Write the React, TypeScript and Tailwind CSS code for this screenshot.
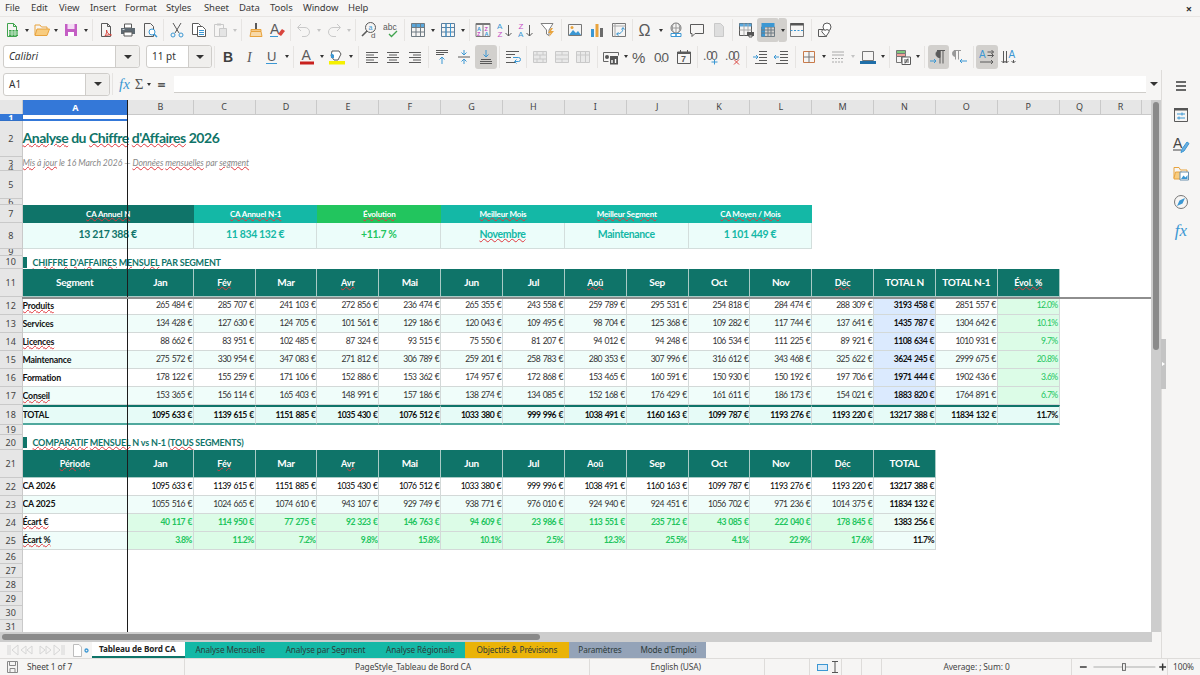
import type { ReactNode } from 'react'

const GRID = 'grid grid-cols-[22.5px_105.5px_65.8px_repeat(14,61.85px)_41px_41px_1fr]'
const MONTHS = ['Jan', 'Fév', 'Mar', 'Avr', 'Mai', 'Jun', 'Jul', 'Aoû', 'Sep', 'Oct', 'Nov', 'Déc']
const FLAGGED = ['Fév', 'Avr', 'Aoû', 'Déc', 'Évol. %', 'Période']
const LETTERS = ['B', 'C', 'D', 'E', 'F', 'G', 'H', 'I', 'J', 'K', 'L', 'M', 'N', 'O', 'P', 'Q', 'R']

const SEGMENTS = [
  { name: 'Produits', flag: true, m: ['265 484', '285 707', '241 103', '272 856', '236 474', '265 355', '243 558', '259 789', '295 531', '254 818', '284 474', '288 309'], n: '3193 458', p: '2851 557', e: '12.0%' },
  { name: 'Services', flag: false, m: ['134 428', '127 630', '124 705', '101 561', '129 186', '120 043', '109 495', '98 704', '125 368', '109 282', '117 744', '137 641'], n: '1435 787', p: '1304 642', e: '10.1%' },
  { name: 'Licences', flag: true, m: ['88 662', '83 951', '102 485', '87 324', '93 515', '75 550', '81 207', '94 012', '94 248', '106 534', '111 225', '89 921'], n: '1108 634', p: '1010 931', e: '9.7%' },
  { name: 'Maintenance', flag: false, m: ['275 572', '330 954', '347 083', '271 812', '306 789', '259 201', '258 783', '280 353', '307 996', '316 612', '343 468', '325 622'], n: '3624 245', p: '2999 675', e: '20.8%' },
  { name: 'Formation', flag: false, m: ['178 122', '155 259', '171 106', '152 886', '153 362', '174 957', '172 868', '153 465', '160 591', '150 930', '150 192', '197 706'], n: '1971 444', p: '1902 436', e: '3.6%' },
  { name: 'Conseil', flag: true, m: ['153 365', '156 114', '165 403', '148 991', '157 186', '138 274', '134 085', '152 168', '176 429', '161 611', '186 173', '154 021'], n: '1883 820', p: '1764 891', e: '6.7%' }
]
const TOTALS = ['1095 633', '1139 615', '1151 885', '1035 430', '1076 512', '1033 380', '999 996', '1038 491', '1160 163', '1099 787', '1193 276', '1193 220']
const PREV = ['1055 516', '1024 665', '1074 610', '943 107', '929 749', '938 771', '976 010', '924 940', '924 451', '1056 702', '971 236', '1014 375']
const DIFF = ['40 117', '114 950', '77 275', '92 323', '146 763', '94 609', '23 986', '113 551', '235 712', '43 085', '222 040', '178 845']
const DIFF_PCT = ['3.8%', '11.2%', '7.2%', '9.8%', '15.8%', '10.1%', '2.5%', '12.3%', '25.5%', '4.1%', '22.9%', '17.6%']

const B = '#3b97d3'
const O = '#e8a33d'
const R = '#d9453e'
const G = '#5a5a5a'
const L = '#c9c9c9'

function I({ children, size = 16 }: { children: ReactNode; size?: number }) {
  return (
    <svg width={size} height={size} viewBox="0 0 16 16" fill="none" stroke={G} strokeWidth={1}>
      {children}
    </svg>
  )
}

function Txt({ x, y, s, c = G, w = 400, it = false, f = 'Liberation Sans', children }: { x: number; y: number; s: number; c?: string; w?: number; it?: boolean; f?: string; children: ReactNode }) {
  return (
    <text x={x} y={y} fontSize={s} fill={c} stroke="none" fontWeight={w} fontStyle={it ? 'italic' : 'normal'} fontFamily={f}>
      {children}
    </text>
  )
}

const Grid = ({ c = G, head }: { c?: string; head?: string }) => (
  <>
    {head && <path d="M1.500 1.500h13v4h-13z" fill={head} stroke="none" />}
    <path d="M1.500 1.500h13v13h-13zM1.500 5.500h13M1.500 10h13M6 1.500v13M10.500 1.500v13" stroke={c} />
  </>
)

const Lines = ({ d, c = G }: { d: string; c?: string }) => <path d={d} stroke={c} />

const Tb = {
  newDoc: <I><path d="M3.500 1.500h6l3 3v10h-9z" stroke="#3fa34d" /><path d="M9.500 1.500v3h3" stroke="#3fa34d" /><path d="M5 8h9v6H5z" fill="#3fa34d" stroke="none" /><path d="M5 10h9M5 12h9M8 8v6M11 8v6" stroke="#c5e8c9" /></I>,
  open: <I><path d="M1 13V3h5l1.500 2H13v2" stroke={O} /><path d="M1 13.500l2-6.500h12.500l-2.500 6.500z" fill="#f8cc7f" stroke={O} /></I>,
  save: <I><path d="M2 2h12v12H2z" fill="#c45ec4" stroke="none" /><path d="M4.500 2h7v5h-7z" fill="#f5dcf5" stroke="none" /><path d="M5 10h6v4H5z" fill="#fff" stroke="none" /></I>,
  pdf: <I><path d="M3.500 1.500h6l3 3v10h-9z" /><path d="M9.500 1.500v3h3" /><path d="M7 14c1.500-2 2-5 1.500-6 .3 3 2 4.500 5 5-2-.5-5 0-6.500 1z" stroke={R} /></I>,
  print: <I><path d="M4.500 2h7v4h-7z" fill="#fff" /><path d="M1 6h14v6H1z" fill="#5f6a72" stroke="none" /><path d="M4 10h8v4H4z" fill="#fff" stroke={G} /><path d="M2.500 7.500h2" stroke="#cfd6da" /></I>,
  preview: <I><path d="M2.500 1.500h6l3 3v10h-9z" /><circle cx="10" cy="10" r="3" stroke={B} fill="#fff" /><path d="M12 12l3 3" stroke={B} strokeWidth={1.500} /></I>,
  cut: <I><path d="M4 1l6 10M12 1L6 11" /><circle cx="4" cy="13" r="2" stroke={B} /><circle cx="12" cy="13" r="2" stroke={B} /></I>,
  copy: <I><path d="M1.500 1.500h6l2 2v9h-8z" fill="#fff" /><path d="M6.500 4.500h5l3 3v7h-8z" fill="#fff" /><path d="M8 8.500h5M8 10.500h5M8 12.500h5" stroke={B} /></I>,
  paste: <I><path d="M2.500 2.500h9v12h-9z" stroke={L} /><path d="M5 1.500h4v2H5z" fill={L} stroke="none" /><path d="M7.500 6.500h7v8h-7z" fill="#e4e4e4" stroke={L} /></I>,
  brush: <I><path d="M7 1h2v6H7z" fill={G} stroke="none" /><path d="M3 7.500h10v2H3z" fill="#f3c98b" stroke={O} /><path d="M3 9.500h10l1 5H2z" fill="#f8d9a8" stroke={O} /></I>,
  clear: <I><Txt x={1} y={12} s={14} c={G}>A</Txt><path d="M9 12l4-5 3 2-4 5z" fill={R} stroke="none" /><path d="M1 14.500h8" stroke={B} /></I>,
  undo: <I><path d="M5 2L1.500 5.500 5 9" stroke={L} /><path d="M2 5.500h7a4.500 4.500 0 010 9H6" stroke={L} /></I>,
  redo: <I><path d="M11 2l3.500 3.500L11 9" stroke={L} /><path d="M14 5.500H7a4.500 4.500 0 000 9h3" stroke={L} /></I>,
  find: <I><circle cx="9.500" cy="5.500" r="5" /><path d="M6 9L1 14" strokeWidth={1.600} /><Txt x={7.500} y={8} s={7} c={B}>a</Txt><Txt x={10} y={15.500} s={8}>d</Txt></I>,
  spell: <I><Txt x={0} y={8} s={8.500}>abc</Txt><path d="M6 12l2.500 2.500L14 9" stroke="#3fa34d" strokeWidth={1.300} /></I>,
  table: <I><Grid c="#6f7b83" head="#5aa8dd" /></I>,
  cols: <I><Grid c="#5a7f9e" /><path d="M6 1.500v13M10.500 1.500v13" stroke={B} /></I>,
  sort: <I><path d="M1 1.500h14M1 1.500v13h14v-13M8 1.500v13" stroke="#777" /><path d="M1 1h14v2H1z" fill="#777" stroke="none" /><Txt x={2} y={8.500} s={5.500} c={B} w={700}>A</Txt><Txt x={2} y={14} s={5.500} c="#c54fc5" w={700}>Z</Txt><Txt x={9.500} y={8.500} s={5.500} c="#c54fc5" w={700}>Z</Txt><Txt x={9.500} y={14} s={5.500} c={B} w={700}>A</Txt></I>,
  az: <I><Txt x={0} y={7} s={8} c={B}>A</Txt><Txt x={0.500} y={15} s={8} c="#c54fc5">Z</Txt><path d="M11.500 3v11M8.500 11l3 3 3-3" /></I>,
  za: <I><Txt x={0.500} y={7} s={8} c="#c54fc5">Z</Txt><Txt x={0} y={15} s={8} c={B}>A</Txt><path d="M11.500 3v11M8.500 11l3 3 3-3" /></I>,
  filter: <I><path d="M1 1.500h12L9 8v5.500L6.500 12V8z" stroke="#808080" fill="#fff" /><path d="M11 6l-3 5h2.500L9 15l5-6h-3l2-3z" fill={O} stroke="none" /></I>,
  image: <I><path d="M1.500 2.500h13v11h-13z" stroke="#777" /><circle cx="5" cy="5.500" r="1.500" fill={O} stroke="none" /><path d="M2 13l4-5 3 3 2-2 3 4z" fill={B} stroke="none" /></I>,
  chart: <I><path d="M2 7h3v8H2z" fill={B} stroke="none" /><path d="M6.500 2h3v13h-3z" fill={O} stroke="none" /><path d="M11 6h3v9h-3z" fill="#6b6b6b" stroke="none" /></I>,
  pivot: <I><path d="M1.500 1.500h13v13h-13z" stroke="#777" /><path d="M1.500 4h13M4 1.500v13" stroke="#aaa" /><path d="M6 12c3 0 6-2 6-6M10.500 7.500L12 5.500l1.500 2M7.500 10.500L5.500 12l2 1.500" stroke={B} /></I>,
  omega: <I><Txt x={0.500} y={14} s={16}>Ω</Txt></I>,
  link: <I><circle cx="8" cy="6" r="5" stroke="#777" /><path d="M3 6h10M8 1v10M5.500 1.500c-1.500 3-1.500 6 0 9M10.500 1.500c1.500 3 1.500 6 0 9" stroke="#999" /><path d="M3 11.500h5v3H3zM8 11.500h5v3H8z" stroke={B} fill="#fff" /></I>,
  comment: <I><path d="M1.500 2.500h13v9H6l-3 3v-3H1.500z" /></I>,
  hf: <I><path d="M3.500 1.500h6l3 3v10h-9z" fill="#dedede" stroke={L} /></I>,
  printArea: <I><path d="M1.500 1.500h12v12h-12z" /><path d="M1.500 1.500h12v3h-12z" fill="#5aa8dd" stroke="none" /><path d="M1.500 8h12M6 1.500v12M10 1.500v12" stroke="#aaa" /><path d="M9 10h7v4H9z" fill="#555" stroke="none" /><path d="M11 13h3v2h-3z" fill="#fff" stroke={G} /></I>,
  freeze: <I><path d="M1.500 5h13v9.500h-13z" stroke="#6f7b83" /><path d="M1.500 1h13v4h-13z" fill="#3b97d3" stroke="none" /><path d="M1.500 5h3.500v9.500H1.500z" fill="#3b97d3" stroke="none" /><path d="M1.500 8h13M1.500 11h13M8 5v9.500M11 5v9.500" stroke="#6f7b83" /></I>,
  split: <I><path d="M1.500 1.500h13v13h-13z" stroke="#777" /><path d="M1.500 1h13v2.500h-13z" fill="#555" stroke="none" /><path d="M1.500 8.500h13" stroke={B} strokeDasharray="2 1.500" /></I>,
  shapes: <I><path d="M1.500 7.500h8v7h-8z" /><circle cx="10" cy="5" r="4" fill="#fff" /><path d="M9 14.500L5 10c-1-2 2-3 3-1.500 1-1.500 5-1 4 1.500z" fill="#fff" /></I>,

  bold: <I><Txt x={3} y={13} s={14} w={700} c="#3f3f3f">B</Txt></I>,
  italic: <I><Txt x={5} y={13} s={14} it f="Liberation Serif">I</Txt></I>,
  under: <I><Txt x={3} y={12} s={13}>U</Txt><path d="M2 14.500h11" stroke={B} /></I>,
  fontCol: <I><Txt x={2.500} y={11} s={14} >A</Txt><path d="M1 12.500h14v3H1z" fill="#c9211e" stroke="none" /></I>,
  highlight: <I><path d="M3 2h7l2 3-3 6H5L2 7z" fill="#fff" /><path d="M2 4l3 2v3H2z" fill={B} stroke="none" /><path d="M0 12h16v3.500H0z" fill="#f5f000" stroke="none" /></I>,
  alignL: <I><Lines d="M2 3.500h12M2 6h8M2 8.500h12M2 11h8M2 13.500h12" /></I>,
  alignC: <I><Lines d="M2 3.500h12M4 6h8M2 8.500h12M4 11h8M2 13.500h12" /></I>,
  alignR: <I><Lines d="M2 3.500h12M6 6h8M2 8.500h12M6 11h8M2 13.500h12" /></I>,
  vTop: <I><Lines d="M2 1.500h12M2 3.500h12M2 5.500h8" /><path d="M8 15V8M5.500 10.500L8 8l2.500 2.500" stroke={B} /></I>,
  vMid: <I><Lines d="M2 8h12" /><path d="M8 1v5M5.500 3.500L8 6l2.500-2.500M8 15v-5M5.500 12.500L8 10l2.500 2.500" stroke={B} /></I>,
  vBot: <I><Lines d="M3 10.500h10M2 12.500h12M2 14.500h12" /><path d="M8 1v7M5.500 5.500L8 8l2.500-2.500" stroke={B} /></I>,
  wrap: <I><Lines d="M1 2.500h13M1 5.500h9M1 8.500h5M1 13.500h9" /><path d="M8 8.500h5.500a1.500 1.500 0 010 4H10M11.500 10.500l-2 2 2 2" stroke={B} /></I>,
  merge: <I><path d="M1.500 2.500h13v11h-13z" fill="#e9e9e9" stroke={L} /><path d="M1.500 6h13M1.500 10h13M5 2.500V6M11 2.500V6M5 10v3.500M11 10v3.500M8 6v4" stroke={L} /></I>,
  merge2: <I><path d="M1.500 2.500h13v11h-13z" fill="#e9e9e9" stroke={L} /><path d="M1.500 6h13M1.500 10h13M8 2.500V6M8 10v3.500" stroke={L} /></I>,
  merge3: <I><path d="M1.500 2.500h13v11h-13z" fill="#e9e9e9" stroke={L} /><path d="M1.500 6h13M5.500 2.500v11M10.500 2.500v11" stroke={L} /></I>,
  currency: <I><path d="M.5 3.500h15v3" stroke="#666" /><path d="M.5 3.500v9h5" stroke="#666" /><path d="M7 7h8v8.500H7z" fill="#555" stroke="none" /><circle cx="4" cy="8" r="2" fill="#555" stroke="none" /><path d="M9 11v3M12.500 10v4" stroke="#fff" strokeWidth={1.400} /></I>,
  percent: <I><Txt x={0} y={13.500} s={15}>%</Txt></I>,
  number: <I><Txt x={0} y={13} s={13.500}>0</Txt><Txt x={7.500} y={13} s={13.500}>0</Txt><circle cx="7.800" cy="12.500" r=".7" fill={G} stroke="none" /></I>,
  date: <I><path d="M1.500 3h13v11.500h-13z" /><path d="M1.500 3h13v2h-13z" fill={G} stroke="none" /><path d="M4.500 1v3M11.500 1v3" /><Txt x={5} y={13} s={9} w={700}>7</Txt></I>,
  addDec: <I><Txt x={0} y={11} s={12}>.0</Txt><Txt x={8} y={11} s={12}>0</Txt><path d="M11.500 10v5.500M8.500 13h6" stroke={B} /></I>,
  delDec: <I><Txt x={0} y={11} s={12}>.0</Txt><Txt x={8} y={11} s={12}>0</Txt><path d="M9 10.500l5 5M14 10.500l-5 5" stroke={R} /></I>,
  indent: <I><Lines d="M7 2.500h8M7 5.500h8M7 8.500h8M7 11.500h8M3 14.500h12" /><path d="M1 8h5M4 6l2 2-2 2" stroke={B} /></I>,
  outdent: <I><Lines d="M7 2.500h8M7 5.500h8M7 8.500h8M7 11.500h8M3 14.500h12" /><path d="M6 8H1M3 6L1 8l2 2" stroke={B} /></I>,
  borders: <I><path d="M2.500 2.500h11v11h-11z" stroke="#c97b4a" /><path d="M8 2.500v11M2.500 8h11" stroke="#777" /></I>,
  borderStyle: <I><Lines d="M2 3h12M2 6h12" c="#aaa" /><path d="M2 9.500h12M2 13h12" stroke="#aaa" strokeDasharray="2 1" /></I>,
  borderCol: <I><path d="M2.500 2.500h11v9h-11z" stroke="#777" /><path d="M0 12h16v3H0z" fill="#1f6ea8" stroke="none" /></I>,
  cond: <I><path d="M1.500 1.500h9v3h-9z" fill="#7fc97f" stroke="#777" /><path d="M1.500 4.500h9v3h-9z" fill="#f0a09a" stroke="#777" /><path d="M1.500 7.500h5v6h-5z" stroke="#777" /><path d="M7 8h8.500v7.500H7z" fill="#fff" stroke={G} /><path d="M9 11h5M9 13h5M10 14.500L13 9.500" /></I>,
  ltr: <I><path d="M7 1.500h8M10 1.500v13M13 1.500v13" /><path d="M10 1.500a3.500 3.500 0 00-4 3.500 3.500 3.500 0 004 3.500z" fill={G} /><path d="M0 12h6M4 10l2 2-2 2" stroke={B} /></I>,
  rtl: <I><path d="M2 1.500h7M3.500 1.500v9M6.500 1.500v9" stroke="#999" /><path d="M3.500 1.500a3 3 0 000 6z" fill="#999" stroke="#999" /><path d="M15 12H8M10 10l-2 2 2 2" stroke={B} /></I>,
  textH: <I><Txt x={0} y={9} s={10} c={B}>A</Txt><path d="M8.500 3h6M8.500 6.500h6M1 13h13M12.500 1l2 2-2 2M12.500 4.500l2 2-2 2M12 11l2 2-2 2" /></I>,
  textV: <I><Txt x={7.500} y={9} s={10} c={B}>A</Txt><path d="M2.500 2v12M5.500 2v12M.5 12l2 2 2-2M3.500 12l2 2 2-2M12.500 11v3M10.500 12l2 2 2-2" /></I>
}

function Btn({ children, active = false }: { children: ReactNode; active?: boolean }) {
  return (
    <div className={`flex h-[24px] w-[21.7px] shrink-0 items-center justify-center rounded-[3px] ${active ? 'bg-[#d2d0cd]' : ''}`}>
      {children}
    </div>
  )
}

function Arrow({ light = false, active = false }: { light?: boolean; active?: boolean }) {
  return (
    <div className={`flex h-[24px] w-[8px] shrink-0 items-center justify-center ${active ? 'rounded-r-[3px] bg-[#d2d0cd]' : ''}`}>
      <div className={`h-0 w-0 border-x-[2.5px] border-t-[3px] border-x-transparent ${light ? 'border-t-[#c4c4c4]' : 'border-t-[#333]'}`} />
    </div>
  )
}

function Sep() {
  return (
    <div className="flex h-[22px] w-[5.5px] shrink-0 justify-center">
      <div className="w-px bg-[#e6e4e2]" />
    </div>
  )
}

function Combo({ label, width, btn, italic = false }: { label: string; width: string; btn: string; italic?: boolean }) {
  return (
    <div className={`flex h-[23px] ${width} shrink-0 rounded-[3px] border border-[#cfcdca] bg-white`}>
      <div className={`flex-1 pl-[5px] text-[10px] leading-[21px] text-[#333] ${italic ? 'italic' : ''}`}>{label}</div>
      <div className={`flex ${btn} items-center justify-center rounded-r-[3px] border-l border-[#cfcdca] bg-[#f0efed]`}>
        <div className="h-0 w-0 border-x-[4px] border-t-[4px] border-x-transparent border-t-[#333]" />
      </div>
    </div>
  )
}

function MenuBar() {
  const items: [string, string][] = [
    ['File', 'w-[26px]'], ['Edit', 'w-[28px]'], ['View', 'w-[31px]'], ['Insert', 'w-[35px]'], ['Format', 'w-[41px]'],
    ['Styles', 'w-[38px]'], ['Sheet', 'w-[35px]'], ['Data', 'w-[31px]'], ['Tools', 'w-[33px]'], ['Window', 'w-[45px]'], ['Help', 'w-[30px]']
  ]
  return (
    <div className="flex h-[17px] shrink-0 items-center border-b border-[#e8e6e4] pl-[5px] text-[9.5px] tracking-[-0.1px] text-[#3a3a3a]">
      {items.map(([t, w]) => (
        <div key={t} className={`${w} shrink-0`}>{t}</div>
      ))}
      <div className="ml-auto mr-[8px] text-[11px] font-bold leading-none text-[#333]">×</div>
    </div>
  )
}

function ToolbarOne() {
  return (
    <div className="flex h-[26px] shrink-0 items-center pl-[1px]">
      <Btn>{Tb.newDoc}</Btn><Arrow /><Btn>{Tb.open}</Btn><Arrow /><Btn>{Tb.save}</Btn><Arrow /><Sep />
      <Btn>{Tb.pdf}</Btn><Btn>{Tb.print}</Btn><Btn>{Tb.preview}</Btn><Sep />
      <Btn>{Tb.cut}</Btn><Btn>{Tb.copy}</Btn><Btn>{Tb.paste}</Btn><Arrow light /><Sep />
      <Btn>{Tb.brush}</Btn><Btn>{Tb.clear}</Btn><Sep />
      <Btn>{Tb.undo}</Btn><Arrow light /><Btn>{Tb.redo}</Btn><Arrow light /><Sep />
      <Btn>{Tb.find}</Btn><Btn>{Tb.spell}</Btn><Sep />
      <Btn>{Tb.table}</Btn><Arrow /><Btn>{Tb.cols}</Btn><Arrow /><Sep />
      <Btn>{Tb.sort}</Btn><Btn>{Tb.az}</Btn><Btn>{Tb.za}</Btn><Btn>{Tb.filter}</Btn><Sep />
      <Btn>{Tb.image}</Btn><Btn>{Tb.chart}</Btn><Btn>{Tb.pivot}</Btn><Sep />
      <Btn>{Tb.omega}</Btn><Arrow /><Btn>{Tb.link}</Btn><Btn>{Tb.comment}</Btn><Btn>{Tb.hf}</Btn><Sep />
      <Btn>{Tb.printArea}</Btn><Btn active>{Tb.freeze}</Btn><Arrow active /><Btn>{Tb.split}</Btn><Sep />
      <Btn>{Tb.shapes}</Btn>
    </div>
  )
}

function ToolbarTwo() {
  return (
    <div className="flex h-[27px] shrink-0 items-center pl-[3px]">
      <Combo label="Calibri" width="w-[137px]" btn="w-[24px]" italic />
      <div className="w-[6px] shrink-0" />
      <Combo label="11 pt" width="w-[66px]" btn="w-[23px]" />
      <Sep />
      <Btn>{Tb.bold}</Btn><Btn>{Tb.italic}</Btn><Btn>{Tb.under}</Btn><Arrow /><Sep />
      <Btn>{Tb.fontCol}</Btn><Arrow /><Btn>{Tb.highlight}</Btn><Arrow /><Sep />
      <Btn>{Tb.alignL}</Btn><Btn>{Tb.alignC}</Btn><Btn>{Tb.alignR}</Btn><Sep />
      <Btn>{Tb.vTop}</Btn><Btn>{Tb.vMid}</Btn><Btn active>{Tb.vBot}</Btn><Sep />
      <Btn>{Tb.wrap}</Btn><Sep />
      <Btn>{Tb.merge}</Btn><Btn>{Tb.merge2}</Btn><Btn>{Tb.merge3}</Btn><Sep />
      <Btn>{Tb.currency}</Btn><Arrow /><Btn>{Tb.percent}</Btn><Btn>{Tb.number}</Btn><Btn>{Tb.date}</Btn><Sep />
      <Btn>{Tb.addDec}</Btn><Btn>{Tb.delDec}</Btn><Sep />
      <Btn>{Tb.indent}</Btn><Btn>{Tb.outdent}</Btn><Sep />
      <Btn>{Tb.borders}</Btn><Arrow /><Btn>{Tb.borderStyle}</Btn><Arrow light /><Btn>{Tb.borderCol}</Btn><Arrow /><Sep />
      <Btn>{Tb.cond}</Btn><Arrow /><Sep />
      <Btn active>{Tb.ltr}</Btn><Btn>{Tb.rtl}</Btn><Sep />
      <Btn active>{Tb.textH}</Btn><Btn>{Tb.textV}</Btn>
    </div>
  )
}

function FormulaBar() {
  return (
    <div className="flex h-[30px] shrink-0 items-center pb-[2px] pl-[3px]">
      <Combo label="A1" width="w-[107px]" btn="w-[24px]" />
      <Sep />
      <div className="flex w-[18px] justify-center font-['Liberation_Serif'] text-[15px] italic text-[#3b97d3]">fx</div>
      <div className="flex w-[11px] justify-center font-['Liberation_Serif'] text-[15px] text-[#555]">Σ</div>
      <Arrow />
      <div className="flex w-[18px] justify-center text-[14px] font-bold text-[#555]">=</div>
      <div className="ml-[3px] h-[17px] w-[972px] border-b border-[#cfcdca] bg-white" />
      <div className="ml-[4px]">
        <div className="h-0 w-0 border-x-[4px] border-t-[4px] border-x-transparent border-t-[#333]" />
      </div>
    </div>
  )
}

function W({ children }: { children: ReactNode }) {
  return <span className="underline decoration-[#e0383e] decoration-wavy decoration-1 underline-offset-0">{children}</span>
}

function RowHead({ n, sel = false }: { n: number; sel?: boolean }) {
  return (
    <div className={`flex items-center justify-center overflow-hidden border-r border-b font-['Noto_Sans'] text-[9px] leading-none ${sel ? 'border-[#2f6fc7] bg-[#3478d8] font-bold text-white' : 'border-[#c9c9c9] bg-[#e6e6e6] text-[#444]'}`}>
      {n}
    </div>
  )
}

function HeaderRow({ n, h, first, cols }: { n: number; h: string; first: string; cols: string[] }) {
  return (
    <div className={`${GRID} ${h}`}>
      <RowHead n={n} />
      {[first, ...cols].map((t, i) => {
        const flagged = FLAGGED.includes(t)
        return (
          <div key={i} className="flex items-center justify-center border-r border-b border-[#a9cbc6] bg-[#0f7469] font-bold text-white">
            {flagged ? <span className="text-[9px] tracking-[-0.1px]"><W>{t}</W></span> : <span className="text-[10px] tracking-[-0.25px]">{t}</span>}
          </div>
        )
      })}
    </div>
  )
}

const CELL = 'flex items-center overflow-hidden whitespace-nowrap border-r border-b border-[#d3d9d8] text-[8.6px] tracking-[-0.6px] [word-spacing:1px]'

function Num({ t, cls = 'text-[#333]' }: { t: string; cls?: string }) {
  return <div className={`${CELL} justify-end pr-px ${cls}`}>{t}</div>
}

function NameCell({ t, flag, alt }: { t: string; flag?: boolean; alt: boolean }) {
  return (
    <div className={`flex items-center overflow-hidden whitespace-nowrap border-r border-b border-[#d3d9d8] text-[8.8px] font-bold tracking-[-0.2px] text-[#111] ${alt ? 'bg-[#f0fdfa]' : 'bg-white'}`}>
      {flag ? <W>{t}</W> : t}
    </div>
  )
}

function KpiHead({ t, cls, flag = true }: { t: string; cls: string; flag?: boolean }) {
  return (
    <div className={`col-span-2 flex items-center justify-center overflow-hidden whitespace-nowrap text-[8px] font-bold tracking-[-0.15px] text-white ${cls}`}>
      {flag ? <W>{t}</W> : t}
    </div>
  )
}

function KpiValue({ t, cls, flag = false }: { t: string; cls: string; flag?: boolean }) {
  return (
    <div className={`col-span-2 flex items-center justify-center whitespace-nowrap border-r border-b border-[#d3dedc] bg-[#ecfdfa] text-[10.5px] font-bold tracking-[-0.35px] ${cls}`}>
      {flag ? <W>{t}</W> : t}
    </div>
  )
}

function Section({ n, h, children }: { n: number; h: string; children: ReactNode }) {
  return (
    <div className={`${GRID} ${h}`}>
      <RowHead n={n} />
      <div className="flex items-center whitespace-nowrap">
        <div className="mr-[6px] h-[11px] w-[4px] shrink-0 bg-[#0f7469]" />
        <div className="text-[9px] font-bold tracking-[-0.2px] text-[#0f7469]">{children}</div>
      </div>
    </div>
  )
}

function Blank({ n, h, sel = false }: { n: number; h: string; sel?: boolean }) {
  return (
    <div className={`${GRID} ${h}`}>
      <RowHead n={n} sel={sel} />
      {sel && <div className="border-b-2 border-[#3478d8]" />}
    </div>
  )
}

function Sheet() {
  return (
    <div className="relative flex-1 overflow-hidden bg-white font-['Lato']">
      <div className={`${GRID} h-[14px] font-['Noto_Sans'] text-[9px] text-[#444]`}>
        <div className="border-r border-b border-[#c9c9c9] bg-[#e6e6e6]" />
        <div className="flex items-center justify-center bg-[#3478d8] font-bold text-white">A</div>
        {LETTERS.map(l => (
          <div key={l} className="flex items-center justify-center border-r border-b border-[#c9c9c9] bg-[#e6e6e6]">{l}</div>
        ))}
        <div className="border-b border-[#c9c9c9] bg-[#e6e6e6]" />
      </div>

      <Blank n={1} h="h-[7px]" sel />
      <div className={`${GRID} h-[36px]`}>
        <RowHead n={2} />
        <div className="flex items-center whitespace-nowrap pb-[3px] text-[14px] font-bold tracking-[-0.48px] text-[#0f7469]">
          <span><W>Analyse</W> du <W>Chiffre</W> <W>d'Affaires</W> 2026</span>
        </div>
      </div>
      <div className={`${GRID} h-[8px]`}>
        <RowHead n={3} />
        <div className="flex items-center whitespace-nowrap pb-[2px] text-[8.6px] italic tracking-[-0.05px] text-[#888]">
          <span><W>Mis</W> à <W>jour</W> le 16 March 2026 — <W>Données</W> <W>mensuelles</W> par <W>segment</W></span>
        </div>
      </div>
      <Blank n={4} h="h-[6px]" />
      <Blank n={5} h="h-[28px]" />
      <Blank n={6} h="h-[6px]" />

      <div className={`${GRID} h-[18px]`}>
        <RowHead n={7} />
        <KpiHead t="CA Annuel N" cls="bg-[#0f7469]" />
        <KpiHead t="CA Annuel N-1" cls="bg-[#14b8a6]" />
        <KpiHead t="Évolution" cls="bg-[#22c55e]" />
        <KpiHead t="Meilleur Mois" cls="bg-[#14b8a6]" />
        <KpiHead t="Meilleur Segment" cls="bg-[#14b8a6]" />
        <KpiHead t="CA Moyen / Mois" cls="bg-[#14b8a6]" />
      </div>
      <div className={`${GRID} h-[25.5px]`}>
        <RowHead n={8} />
        <KpiValue t="13 217 388 €" cls="text-[#0f7469]" />
        <KpiValue t="11 834 132 €" cls="text-[#14b8a6]" />
        <KpiValue t="+11.7 %" cls="text-[#22c55e]" />
        <KpiValue t="Novembre" cls="text-[#14b8a6]" flag />
        <KpiValue t="Maintenance" cls="text-[#14b8a6]" />
        <KpiValue t="1 101 449 €" cls="text-[#14b8a6]" />
      </div>
      <Blank n={9} h="h-[7px]" />
      <Section n={10} h="h-[13.5px]"><W>CHIFFRE</W> <W>D'AFFAIRES</W> <W>MENSUEL</W> PAR SEGMENT</Section>
      <HeaderRow n={11} h="h-[28px]" first="Segment" cols={[...MONTHS, 'TOTAL N', 'TOTAL N-1', 'Évol. %']} />

      {SEGMENTS.map((s, i) => {
        const alt = i % 2 === 1
        const bg = alt ? 'bg-[#f0fdfa] text-[#333]' : 'bg-white text-[#333]'
        return (
          <div key={s.name} className={`${GRID} h-[18px]`}>
            <RowHead n={12 + i} />
            <NameCell t={s.name} flag={s.flag} alt={alt} />
            {s.m.map((v, j) => <Num key={j} t={`${v} €`} cls={bg} />)}
            <Num t={`${s.n} €`} cls="bg-[#dbeafe] font-bold text-[#111]" />
            <Num t={`${s.p} €`} cls={bg} />
            <Num t={s.e} cls="bg-[#dcfce7] text-[#22c55e]" />
          </div>
        )
      })}

      <div className={`${GRID} h-[20px]`}>
        <RowHead n={18} />
        <div className="flex items-center overflow-hidden whitespace-nowrap border-t-2 border-r border-b-2 border-r-[#d3d9d8] border-t-[#0f7469] border-b-[#4fa89d] bg-[#e6fbf7] text-[8.8px] font-bold tracking-[-0.2px] text-[#111]">TOTAL</div>
        {[...TOTALS, '13217 388', '11834 132'].map((v, j) => (
          <div key={j} className={`${CELL} justify-end border-t-2 border-b-2 border-t-[#0f7469] border-b-[#4fa89d] bg-[#e6fbf7] pr-px font-bold text-[#111]`}>{v} €</div>
        ))}
        <div className={`${CELL} justify-end border-t-2 border-b-2 border-t-[#0f7469] border-b-[#4fa89d] bg-[#e6fbf7] pr-px font-bold text-[#111]`}>11.7%</div>
      </div>
      <Blank n={19} h="h-[10px]" />
      <Section n={20} h="h-[15px]"><W>COMPARATIF</W> <W>MENSUEL</W> N vs N-1 (<W>TOUS</W> SEGMENTS)</Section>
      <HeaderRow n={21} h="h-[27.5px]" first="Période" cols={[...MONTHS, 'TOTAL']} />

      <div className={`${GRID} h-[18px]`}>
        <RowHead n={22} />
        <NameCell t="CA 2026" alt={false} />
        {TOTALS.map((v, j) => <Num key={j} t={`${v} €`} cls="bg-white" />)}
        <Num t="13217 388 €" cls="bg-white font-bold text-[#111]" />
      </div>
      <div className={`${GRID} h-[18px]`}>
        <RowHead n={23} />
        <NameCell t="CA 2025" alt />
        {PREV.map((v, j) => <Num key={j} t={`${v} €`} cls="bg-[#f0fdfa] text-[#333]" />)}
        <Num t="11834 132 €" cls="bg-[#f0fdfa] font-bold text-[#111]" />
      </div>
      <div className={`${GRID} h-[18px]`}>
        <RowHead n={24} />
        <NameCell t="Écart €" flag alt={false} />
        {DIFF.map((v, j) => <Num key={j} t={`${v} €`} cls="bg-[#dcfce7] font-bold text-[#22c55e]" />)}
        <Num t="1383 256 €" cls="bg-[#eefcf6] font-bold text-[#111]" />
      </div>
      <div className={`${GRID} h-[18px]`}>
        <RowHead n={25} />
        <NameCell t="Écart %" flag alt />
        {DIFF_PCT.map((v, j) => <Num key={j} t={v} cls="bg-[#dcfce7] font-bold text-[#22c55e]" />)}
        <Num t="11.7%" cls="bg-[#f0fdfa] font-bold text-[#111]" />
      </div>
      {[26, 27, 28, 29, 30, 31].map(n => <Blank key={n} n={n} h="h-[14px]" />)}

      {/* frozen pane split lines sit on top of the cells */}
      <div className="absolute top-0 bottom-0 left-[127px] w-px bg-[#1c1c1c]" />
      <div className="absolute top-[197px] right-0 left-[22px] h-[2px] bg-[#8e8e8e]" />
    </div>
  )
}

function Sidebar() {
  return (
    <div className="flex w-[38px] shrink-0 flex-col items-center pt-px">
      <div className="flex h-[29px] items-center">
        <svg width="14" height="12" viewBox="0 0 14 12" stroke="#3a3a3a" strokeWidth="1.400"><path d="M2 2h10M2 6h10M2 10h10" /></svg>
      </div>
      <div className="flex h-[29px] items-center">
        <svg width="16" height="16" viewBox="0 0 16 16" fill="none" stroke={G}><path d="M1.500 1.500h13v13h-13z" /><path d="M1 1h14v2.500H1z" fill="#555" stroke="none" /><path d="M4 7h8M4 11h8" stroke={B} /><path d="M9 5.500v3M6 9.500v3" stroke={B} /></svg>
      </div>
      <div className="flex h-[29px] items-center">
        <svg width="18" height="18" viewBox="0 0 18 18" fill="none"><text x="1" y="13" fontSize="14" fontFamily="Liberation Sans" fill="#444">A</text><path d="M1 15h8" stroke="#444" /><path d="M10 14l5-7 2 1.500-5 7.500-3 1.500z" fill="#6aaee0" stroke="#3b97d3" /></svg>
      </div>
      <div className="flex h-[29px] items-center">
        <svg width="16" height="16" viewBox="0 0 16 16" fill="none"><path d="M1 13V2.500h5L7.500 5H14v2" stroke={O} /><path d="M1 13l1.500-6H9v7H1z" fill="#f8cc7f" stroke={O} /><path d="M7 7h8.500v8H7z" fill="#fff" stroke="#6b8fab" /><path d="M8 14l2.500-3.500 2 2 2-2.500v4z" fill={B} /></svg>
      </div>
      <div className="flex h-[29px] items-center">
        <svg width="16" height="16" viewBox="0 0 16 16" fill="none"><circle cx="8" cy="8" r="6.500" stroke="#777" /><path d="M12 4L9.500 9.500 4 12l2.500-5.500z" fill={B} /></svg>
      </div>
      <div className="flex h-[29px] items-center font-['Liberation_Serif'] text-[17px] italic leading-none text-[#3b97d3]">fx</div>
    </div>
  )
}

const TABS: [string, string][] = [
  ['Analyse Mensuelle', 'w-[90.5px] bg-[#14b8a6]'],
  ['Analyse par Segment', 'w-[100px] bg-[#14b8a6]'],
  ['Analyse Régionale', 'w-[89.5px] bg-[#14b8a6]'],
  ['Objectifs & Prévisions', 'w-[104px] bg-[#eab308]'],
  ['Paramètres', 'w-[62px] bg-[#94a3b8]'],
  ["Mode d'Emploi", 'w-[75px] bg-[#94a3b8]']
]

function TabBar() {
  return (
    <div className="flex h-[16px] shrink-0 items-stretch text-[8.2px] tracking-[-0.1px]">
      <div className="flex w-[73px] items-center pl-[7px]">
        <svg width="58" height="12" viewBox="0 0 58 12" fill="none" stroke="#d6d6d6"><path d="M1 1v10M3 1v10M11 1L5 6l6 5zM19 2l-5 4 5 4zM25 2l-5 4 5 4zM33 2l5 4-5 4zM39 2l5 4-5 4zM47 1l6 5-6 5zM55 1v10M57 1v10" /></svg>
      </div>
      <div className="flex w-[19px] items-center gap-[2px]">
        <svg width="9" height="13" viewBox="0 0 9 13" fill="#fff" stroke="#bdbdbd"><path d="M.5.5h5.500l2.500 2.500v9.500H.5z" /></svg>
        <svg width="5" height="7" viewBox="0 0 5 7" fill="none" stroke="#3b97d3" strokeWidth="1.300"><circle cx="2.500" cy="3.500" r="1.500" /></svg>
      </div>
      <div className="flex w-[93px] items-center border-b-2 border-[#0f7469] bg-white pl-[7px] font-bold text-[#222]">
        Tableau de Bord CA
      </div>
      {TABS.map(([t, cls]) => (
        <div key={t} className={`flex items-center justify-center text-[#2c3a38] ${cls}`}>{t}</div>
      ))}
    </div>
  )
}

function StatusBar() {
  const sep = 'border-r border-[#dedcda]'
  return (
    <div className="flex h-[17px] shrink-0 items-center border-t border-[#dedcda] text-[8.4px] tracking-[-0.1px] text-[#444]">
      <div className={`flex h-full w-[185px] items-center pl-[7px] ${sep}`}>
        <svg width="11" height="12" viewBox="0 0 11 12" fill="none" stroke="#888"><path d="M.5.5h10v11H.5zM2.500.5v4h6v-4M3 11.500v-4h5v4" /></svg>
        <span className="ml-[9px]">Sheet 1 of 7</span>
      </div>
      <div className={`flex h-full w-[405px] items-center justify-center ${sep} pl-[52px]`}>PageStyle_Tableau de Bord CA</div>
      <div className={`flex h-full w-[175px] items-center justify-end pr-[63px] ${sep}`}>English (USA)</div>
      <div className={`h-full w-[45px] ${sep}`} />
      <div className={`flex h-full w-[32px] items-center gap-[4px] pl-[7px] ${sep}`}>
        <div className="h-[7px] w-[11px] shrink-0 border border-[#3b97d3] bg-[#dcebf7]" />
        <svg className="shrink-0" width="6" height="12" viewBox="0 0 6 12" fill="none" stroke="#555"><path d="M0 .5h6M0 11.500h6M3 .5v11" /></svg>
      </div>
      <div className={`h-full w-[20px] ${sep}`} />
      <div className={`h-full w-[20px] ${sep}`} />
      <div className={`flex h-full w-[190px] items-center justify-center ${sep}`}>Average: ; Sum: 0</div>
      <div className={`flex h-full w-[96px] items-center pl-[6px] ${sep}`}>
        <svg width="92" height="12" viewBox="0 0 92 12" fill="none" stroke="#555"><path d="M2 6h7" strokeWidth="1.500" stroke="#333" /><path d="M16 6h64" stroke="#aaa" /><rect x="46" y="2.500" width="3" height="7" fill="#f6f5f4" stroke="#666" /><path d="M84 6h7M87.500 2.500v7" strokeWidth="1.500" stroke="#333" /></svg>
      </div>
      <div className="pl-[5px]">100%</div>
    </div>
  )
}

export default function App() {
  return (
    <div className="relative flex h-[675px] w-[1200px] flex-col overflow-hidden bg-[#f6f5f4] font-['Noto_Sans',sans-serif]">
      <MenuBar />
      <ToolbarOne />
      <ToolbarTwo />
      <div className="flex min-h-0 flex-1">
        <div className="flex w-[1162px] shrink-0 flex-col border-r border-[#dedcda]">
          <FormulaBar />
          <div className="flex min-h-0 flex-1">
            <Sheet />
            <div className="w-[10px] shrink-0 bg-[#cdcdcd] px-[2px] pt-[2px]">
              <div className="h-[248px] rounded-[3px] bg-[#8a8a8a]" />
            </div>
          </div>
          <div className="flex h-[10px] shrink-0">
            <div className="w-[1152px] bg-[#cdcdcd] py-[2px] pl-[2px]">
              <div className="h-full w-[538px] rounded-[3px] bg-[#8a8a8a]" />
            </div>
          </div>
          <TabBar />
        </div>
        <Sidebar />
      </div>
      <StatusBar />
      {/* sidebar dock handle */}
      <div className="absolute top-[339px] left-[1161px] flex h-[50px] w-[5px] items-center justify-center bg-[#c4c4c4]">
        <div className="h-0 w-0 border-y-[2px] border-l-[3px] border-y-transparent border-l-white" />
      </div>
    </div>
  )
}
